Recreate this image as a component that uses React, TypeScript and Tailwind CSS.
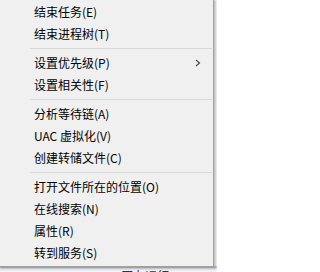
import React from 'react';

type Item = { label: string; sub?: boolean } | 'sep';

const ITEMS: Item[] = [
  { label: '结束任务(E)' },
  { label: '结束进程树(T)' },
  'sep',
  { label: '设置优先级(P)', sub: true },
  { label: '设置相关性(F)' },
  'sep',
  { label: '分析等待链(A)' },
  { label: 'UAC 虚拟化(V)' },
  { label: '创建转储文件(C)' },
  'sep',
  { label: '打开文件所在的位置(O)' },
  { label: '在线搜索(N)' },
  { label: '属性(R)' },
  { label: '转到服务(S)' },
];

const App: React.FC = () => {
  return (
    <div
      className="relative w-[217px] h-[272px] overflow-hidden bg-white"
      style={{ fontFamily: '"Microsoft YaHei", "Noto Sans CJK SC", sans-serif' }}
    >
      {/* list row behind the menu */}
      <div className="flex flex-col pt-[266px]">
        <div className="h-[2px] bg-[#c5d3e3]" />
        <div className="flex h-[20px] items-start gap-[14px] bg-[#eef3f9] pl-[74px] text-[12px] leading-[16px] text-[#333]">
          <span>21936</span>
          <span>正在运行</span>
        </div>
      </div>

      {/* context menu */}
      <div className="absolute left-[-2px] top-[-2px] w-[216px] h-[269px] border border-[#a0a0a0] bg-[#f0f0f0] shadow-[2px_2px_2px_rgba(0,0,0,0.25)]">
        <div className="flex flex-col pt-[2px] pr-[1px]">
          {ITEMS.map((item, i) =>
            item === 'sep' ? (
              <div key={i} className="flex h-[7px] items-center pl-[31px]">
                <div className="h-[1px] w-full bg-[#d7d7d7]" />
              </div>
            ) : (
              <div key={i} className="flex h-[22px] items-center pl-[35px] pr-[10px] text-[12px] text-black">
                <span className="flex-1 whitespace-nowrap">{item.label}</span>
                {item.sub && (
                  <svg width="6" height="8" viewBox="0 0 6 8" className="mr-[1px]">
                    <path d="M1 1 L4.5 4 L1 7" fill="none" stroke="#444" strokeWidth="1.1" />
                  </svg>
                )}
              </div>
            )
          )}
        </div>
      </div>
    </div>
  );
};

export default App;
